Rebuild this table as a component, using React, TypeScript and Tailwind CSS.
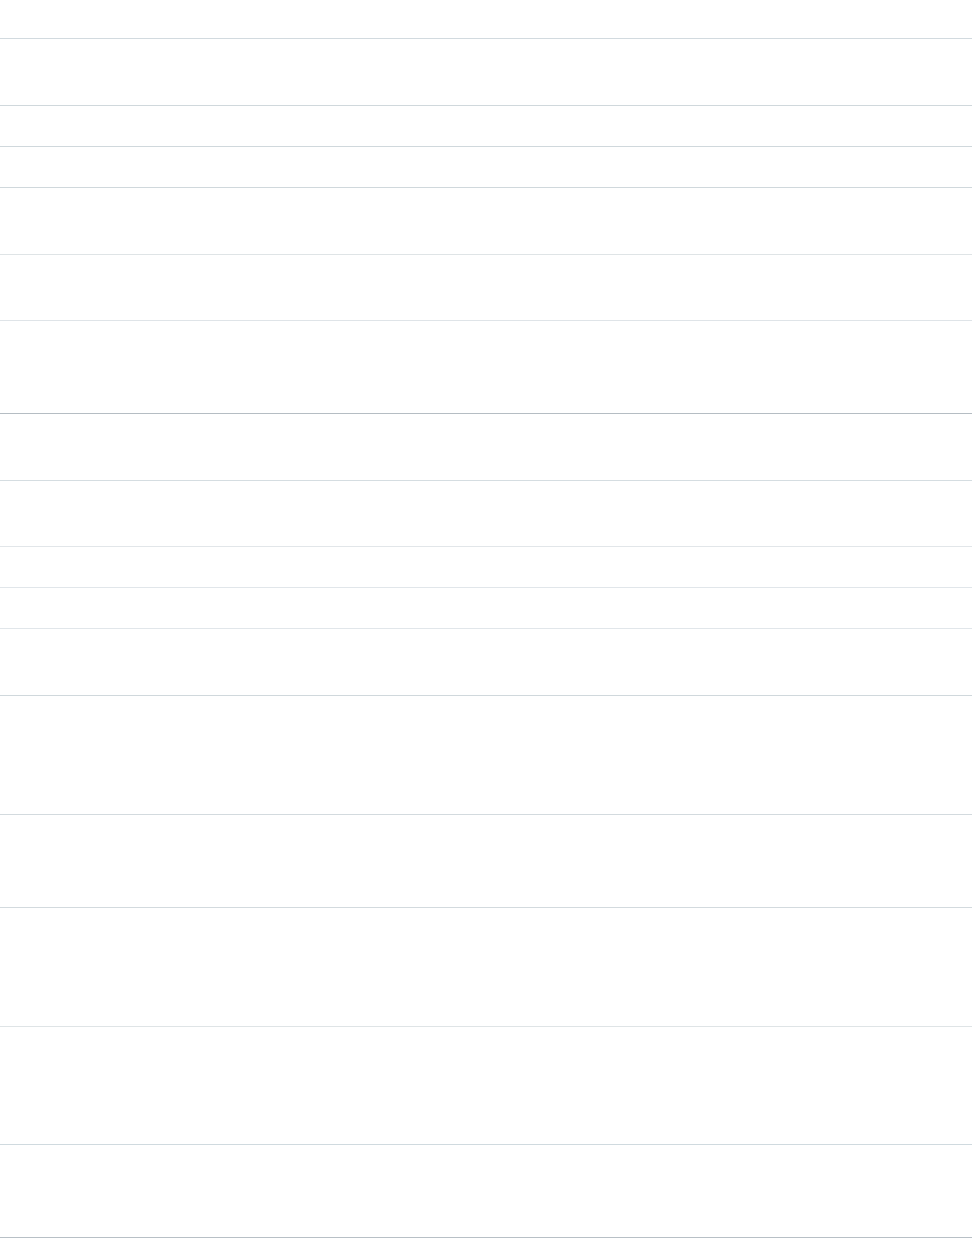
import React from "react";

// each row: total height incl. bottom border + border color class
const rows: { h: string; border: string }[] = [
  { h: "h-[39px]", border: "border-[#d2dadf]" },
  { h: "h-[67px]", border: "border-[#d0d8dc]" },
  { h: "h-[41px]", border: "border-[#d0d8dc]" },
  { h: "h-[41px]", border: "border-[#d0d8dc]" },
  { h: "h-[67px]", border: "border-[#dfe4e6]" },
  { h: "h-[66px]", border: "border-[#dfe4e8]" },
  { h: "h-[93px]", border: "border-[#b5bdc3]" },
  { h: "h-[67px]", border: "border-[#d5dde1]" },
  { h: "h-[66px]", border: "border-[#e2e6e9]" },
  { h: "h-[41px]", border: "border-[#e1e6ea]" },
  { h: "h-[41px]", border: "border-[#e1e6ea]" },
  { h: "h-[67px]", border: "border-[#d0d8dc]" },
  { h: "h-[119px]", border: "border-[#d3dade]" },
  { h: "h-[93px]", border: "border-[#d3dade]" },
  { h: "h-[119px]", border: "border-[#dfe4e6]" },
  { h: "h-[118px]", border: "border-[#d0dadf]" },
  { h: "h-[93px]", border: "border-[#b8c0c6]" },
];

const App = () => {
  return (
    <div className="min-h-screen w-full bg-white">
      <div className="flex w-[972px] flex-col">
        {rows.map((row, i) => (
          <div key={i} className={`${row.h} box-border border-b ${row.border}`} />
        ))}
      </div>
    </div>
  );
};

export default App;
